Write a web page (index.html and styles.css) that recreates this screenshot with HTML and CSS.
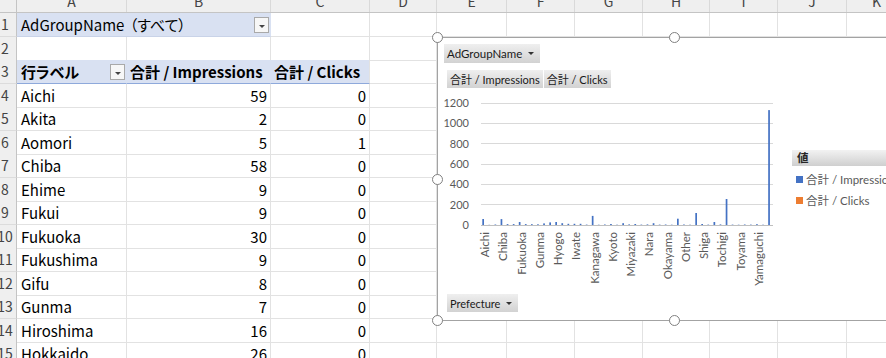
FILE: index.html
```html
<!DOCTYPE html>
<html lang="ja">
<head>
    <meta charset="UTF-8">
    <title>Pivot - Prefecture</title>
    <link rel="stylesheet" href="styles.css">
</head>
<body>
<div class="page">
    <div class="sheet">
        <div class="row heads">
            <div class="corner"></div>
            <div class="ch">A</div><div class="ch">B</div><div class="ch">C</div><div class="ch">D</div>
            <div class="ch">E</div><div class="ch">F</div><div class="ch">G</div><div class="ch">H</div>
            <div class="ch">I</div><div class="ch">J</div><div class="ch">K</div>
        </div>

        <div class="row">
            <div class="rh">1</div>
            <div class="c band filter"><span>AdGroupName <span class="all">（すべて）</span></span><span class="dd"></span></div>
            <div class="c"></div>
            <span class="c"></span><span class="c"></span><span class="c"></span><span class="c"></span>
            <span class="c"></span><span class="c"></span><span class="c"></span><span class="c"></span>
        </div>

        <div class="row">
            <div class="rh">2</div>
            <div class="c"></div><div class="c"></div><div class="c"></div>
            <span class="c"></span><span class="c"></span><span class="c"></span><span class="c"></span>
            <span class="c"></span><span class="c"></span><span class="c"></span><span class="c"></span>
        </div>

        <div class="row">
            <div class="rh">3</div>
            <div class="c band head label-head">行ラベル<span class="dd"></span></div>
            <div class="c band head">合計 / Impressions</div>
            <div class="c band head last">合計 / Clicks</div>
            <span class="c"></span><span class="c"></span><span class="c"></span><span class="c"></span>
            <span class="c"></span><span class="c"></span><span class="c"></span><span class="c"></span>
        </div>

        <div class="row">
            <div class="rh">4</div>
            <div class="c">Aichi</div><div class="c num">59</div><div class="c num">0</div>
            <span class="c"></span><span class="c"></span><span class="c"></span><span class="c"></span>
            <span class="c"></span><span class="c"></span><span class="c"></span><span class="c"></span>
        </div>
        <div class="row">
            <div class="rh">5</div>
            <div class="c">Akita</div><div class="c num">2</div><div class="c num">0</div>
            <span class="c"></span><span class="c"></span><span class="c"></span><span class="c"></span>
            <span class="c"></span><span class="c"></span><span class="c"></span><span class="c"></span>
        </div>
        <div class="row">
            <div class="rh">6</div>
            <div class="c">Aomori</div><div class="c num">5</div><div class="c num">1</div>
            <span class="c"></span><span class="c"></span><span class="c"></span><span class="c"></span>
            <span class="c"></span><span class="c"></span><span class="c"></span><span class="c"></span>
        </div>
        <div class="row">
            <div class="rh">7</div>
            <div class="c">Chiba</div><div class="c num">58</div><div class="c num">0</div>
            <span class="c"></span><span class="c"></span><span class="c"></span><span class="c"></span>
            <span class="c"></span><span class="c"></span><span class="c"></span><span class="c"></span>
        </div>
        <div class="row">
            <div class="rh">8</div>
            <div class="c">Ehime</div><div class="c num">9</div><div class="c num">0</div>
            <span class="c"></span><span class="c"></span><span class="c"></span><span class="c"></span>
            <span class="c"></span><span class="c"></span><span class="c"></span><span class="c"></span>
        </div>
        <div class="row">
            <div class="rh">9</div>
            <div class="c">Fukui</div><div class="c num">9</div><div class="c num">0</div>
            <span class="c"></span><span class="c"></span><span class="c"></span><span class="c"></span>
            <span class="c"></span><span class="c"></span><span class="c"></span><span class="c"></span>
        </div>
        <div class="row">
            <div class="rh">10</div>
            <div class="c">Fukuoka</div><div class="c num">30</div><div class="c num">0</div>
            <span class="c"></span><span class="c"></span><span class="c"></span><span class="c"></span>
            <span class="c"></span><span class="c"></span><span class="c"></span><span class="c"></span>
        </div>
        <div class="row">
            <div class="rh">11</div>
            <div class="c">Fukushima</div><div class="c num">9</div><div class="c num">0</div>
            <span class="c"></span><span class="c"></span><span class="c"></span><span class="c"></span>
            <span class="c"></span><span class="c"></span><span class="c"></span><span class="c"></span>
        </div>
        <div class="row">
            <div class="rh">12</div>
            <div class="c">Gifu</div><div class="c num">8</div><div class="c num">0</div>
            <span class="c"></span><span class="c"></span><span class="c"></span><span class="c"></span>
            <span class="c"></span><span class="c"></span><span class="c"></span><span class="c"></span>
        </div>
        <div class="row">
            <div class="rh">13</div>
            <div class="c">Gunma</div><div class="c num">7</div><div class="c num">0</div>
            <span class="c"></span><span class="c"></span><span class="c"></span><span class="c"></span>
            <span class="c"></span><span class="c"></span><span class="c"></span><span class="c"></span>
        </div>
        <div class="row">
            <div class="rh">14</div>
            <div class="c">Hiroshima</div><div class="c num">16</div><div class="c num">0</div>
            <span class="c"></span><span class="c"></span><span class="c"></span><span class="c"></span>
            <span class="c"></span><span class="c"></span><span class="c"></span><span class="c"></span>
        </div>
        <div class="row">
            <div class="rh">15</div>
            <div class="c">Hokkaido</div><div class="c num">26</div><div class="c num">0</div>
            <span class="c"></span><span class="c"></span><span class="c"></span><span class="c"></span>
            <span class="c"></span><span class="c"></span><span class="c"></span><span class="c"></span>
        </div>
    </div>

    <!-- pivot chart floating over the sheet -->
    <div class="chart">
        <div class="btn chart-filter">AdGroupName<span class="tri"></span></div>
        <div class="series-row">
            <div class="btn series">合計 / Impressions</div>
            <div class="btn series">合計 / Clicks</div>
        </div>
        <div class="plot-row">
            <svg class="plot" width="350" height="200" viewBox="0 0 350 200">
                <g class="grid">
                    <line x1="43" x2="335" y1="10.5" y2="10.5"/>
                    <line x1="43" x2="335" y1="30.5" y2="30.5"/>
                    <line x1="43" x2="335" y1="50.5" y2="50.5"/>
                    <line x1="43" x2="335" y1="71.5" y2="71.5"/>
                    <line x1="43" x2="335" y1="91.5" y2="91.5"/>
                    <line x1="43" x2="335" y1="111.5" y2="111.5"/>
                    <line class="axis" x1="43" x2="335" y1="132.5" y2="132.5"/>
                </g>
                <g class="ylab">
                    <text x="31" y="14">1200</text>
                    <text x="31" y="34">1000</text>
                    <text x="31" y="55">800</text>
                    <text x="31" y="75">600</text>
                    <text x="31" y="95">400</text>
                    <text x="31" y="116">200</text>
                    <text x="31" y="136">0</text>
                </g>
                <g class="bars">
                    <rect x="44.3" y="126.0" width="1.7" height="6.0"/>
                    <rect x="50.4" y="131.8" width="1.7" height="0.2"/>
                    <rect x="56.5" y="131.5" width="1.7" height="0.5"/>
                    <rect x="62.6" y="126.1" width="1.7" height="5.9"/>
                    <rect x="68.7" y="131.1" width="1.7" height="0.9"/>
                    <rect x="74.8" y="131.1" width="1.7" height="0.9"/>
                    <rect x="80.8" y="129.0" width="1.7" height="3.0"/>
                    <rect x="86.9" y="131.1" width="1.7" height="0.9"/>
                    <rect x="93.0" y="131.2" width="1.7" height="0.8"/>
                    <rect x="99.1" y="131.3" width="1.7" height="0.7"/>
                    <rect x="105.2" y="130.4" width="1.7" height="1.6"/>
                    <rect x="111.3" y="129.4" width="1.7" height="2.6"/>
                    <rect x="117.3" y="129.0" width="1.7" height="3.0"/>
                    <rect x="123.4" y="130.2" width="1.7" height="1.8"/>
                    <rect x="129.5" y="130.8" width="1.7" height="1.2"/>
                    <rect x="135.6" y="130.8" width="1.7" height="1.2"/>
                    <rect x="141.7" y="130.8" width="1.7" height="1.2"/>
                    <rect x="147.8" y="131.6" width="1.7" height="0.4"/>
                    <rect x="153.8" y="122.9" width="1.7" height="9.1"/>
                    <rect x="159.9" y="131.7" width="1.7" height="0.3"/>
                    <rect x="166.0" y="131.5" width="1.7" height="0.5"/>
                    <rect x="172.1" y="131.0" width="1.7" height="1.0"/>
                    <rect x="178.2" y="131.7" width="1.7" height="0.3"/>
                    <rect x="184.3" y="130.2" width="1.7" height="1.8"/>
                    <rect x="190.3" y="131.4" width="1.7" height="0.6"/>
                    <rect x="196.4" y="131.0" width="1.7" height="1.0"/>
                    <rect x="202.5" y="131.6" width="1.7" height="0.4"/>
                    <rect x="208.6" y="131.4" width="1.7" height="0.6"/>
                    <rect x="214.7" y="130.2" width="1.7" height="1.8"/>
                    <rect x="220.8" y="131.6" width="1.7" height="0.4"/>
                    <rect x="226.8" y="131.5" width="1.7" height="0.5"/>
                    <rect x="232.9" y="131.7" width="1.7" height="0.3"/>
                    <rect x="239.0" y="125.7" width="1.7" height="6.3"/>
                    <rect x="245.1" y="131.5" width="1.7" height="0.5"/>
                    <rect x="251.2" y="131.7" width="1.7" height="0.3"/>
                    <rect x="257.3" y="120.0" width="1.7" height="12.0"/>
                    <rect x="263.3" y="131.0" width="1.7" height="1.0"/>
                    <rect x="269.4" y="131.6" width="1.7" height="0.4"/>
                    <rect x="275.5" y="129.0" width="1.7" height="3.0"/>
                    <rect x="281.6" y="131.4" width="1.7" height="0.6"/>
                    <rect x="287.7" y="106.0" width="1.7" height="26.0"/>
                    <rect x="293.7" y="131.6" width="1.7" height="0.4"/>
                    <rect x="299.8" y="131.7" width="1.7" height="0.3"/>
                    <rect x="305.9" y="131.5" width="1.7" height="0.5"/>
                    <rect x="312.0" y="131.6" width="1.7" height="0.4"/>
                    <rect x="318.1" y="131.2" width="1.7" height="0.8"/>
                    <rect x="324.2" y="131.7" width="1.7" height="0.3"/>
                    <rect x="330.2" y="17.1" width="1.7" height="114.9"/>
                </g>
                <g class="xlab">
                    <text x="51" y="139" transform="rotate(-90 51 139)">Aichi</text>
                    <text x="69.25" y="139" transform="rotate(-90 69.25 139)">Chiba</text>
                    <text x="87.5" y="139" transform="rotate(-90 87.5 139)">Fukuoka</text>
                    <text x="105.75" y="139" transform="rotate(-90 105.75 139)">Gunma</text>
                    <text x="124" y="139" transform="rotate(-90 124 139)">Hyogo</text>
                    <text x="142.25" y="139" transform="rotate(-90 142.25 139)">Iwate</text>
                    <text x="160.5" y="139" transform="rotate(-90 160.5 139)">Kanagawa</text>
                    <text x="178.75" y="139" transform="rotate(-90 178.75 139)">Kyoto</text>
                    <text x="197" y="139" transform="rotate(-90 197 139)">Miyazaki</text>
                    <text x="215.25" y="139" transform="rotate(-90 215.25 139)">Nara</text>
                    <text x="233.5" y="139" transform="rotate(-90 233.5 139)">Okayama</text>
                    <text x="251.75" y="139" transform="rotate(-90 251.75 139)">Other</text>
                    <text x="270" y="139" transform="rotate(-90 270 139)">Shiga</text>
                    <text x="288.25" y="139" transform="rotate(-90 288.25 139)">Tochigi</text>
                    <text x="306.5" y="139" transform="rotate(-90 306.5 139)">Toyama</text>
                    <text x="324.75" y="139" transform="rotate(-90 324.75 139)">Yamaguchi</text>
                </g>
            </svg>
            <div class="legend">
                <div class="legend-head">値</div>
                <div class="legend-item"><span class="swatch blue"></span>合計 / Impressions</div>
                <div class="legend-item"><span class="swatch orange"></span>合計 / Clicks</div>
            </div>
        </div>
        <div class="btn axis-filter">Prefecture<span class="tri"></span></div>

        <span class="handle h-tl"></span>
        <span class="handle h-tm"></span>
        <span class="handle h-ml"></span>
        <span class="handle h-bl"></span>
        <span class="handle h-bm"></span>
    </div>
</div>
</body>
</html>
```

FILE: styles.css
```css
html, body {
    margin: 0;
    padding: 0;
    background: #fff;
}

body {
    width: 886px;
    height: 358px;
    overflow: hidden;
    font-family: "Noto Sans CJK JP", "Noto Sans", sans-serif;
    color: #000;
}

.page {
    position: relative;
    display: flow-root;
    width: 886px;
    height: 358px;
}

/* ---------- sheet ---------- */

.sheet {
    margin: -7px 0 0 -6px;
    font-feature-settings: "palt";
}

.row {
    display: grid;
    grid-template-columns: 23px 110px 144px 99px 67px 70px 68px 68px 67px 68px 69px 60px;
    height: 23.5px;
}

.heads {
    height: 20px;
    background: #efefef;
    border-bottom: 1px solid #c4c4c4;
    box-sizing: border-box;
}

.corner {
    border-right: 1px solid #c4c4c4;
}

.ch {
    font-size: 14px;
    line-height: 16px;
    text-align: center;
    color: #444;
    border-right: 1px solid #d9d9d9;
}

.rh {
    background: #efefef;
    border-right: 1px solid #c4c4c4;
    border-bottom: 1px solid #dcdcdc;
    font-size: 14px;
    line-height: 23px;
    text-align: center;
    color: #444;
}

.c {
    display: block;
    border-right: 1px solid #e2e2e2;
    border-bottom: 1px solid #e2e2e2;
    font-size: 15px;
    line-height: 23px;
    padding: 0 3px 0 4px;
    white-space: nowrap;
    overflow: hidden;
}

.num {
    text-align: right;
}

.band {
    background: #d9e1f2;
    border-right-color: #d9e1f2;
}

.filter {
    grid-column: span 2;
    display: flex;
    justify-content: space-between;
    align-items: center;
    border-bottom-color: #c9d3e8;
    padding-right: 1px;
}

.all {
    margin-left: 2px;
}

.head {
    font-weight: bold;
    border-bottom-color: #8ea9db;
    padding-left: 3px;
}

.last {
    border-right-color: #e2e2e2;
}

.label-head {
    display: flex;
    justify-content: space-between;
    align-items: center;
    padding-left: 4px;
    padding-right: 1px;
}

.dd {
    position: relative;
    width: 15px;
    height: 16px;
    background: #f7f7f7;
    border: 1px solid #a9a9a9;
    box-sizing: border-box;
}

.dd::after {
    content: "";
    position: absolute;
    left: 4px;
    top: 7px;
    border-left: 3px solid transparent;
    border-right: 3px solid transparent;
    border-top: 3px solid #444;
}

/* ---------- chart ---------- */

.chart {
    position: absolute;
    left: 437px;
    top: 37px;
    width: 474px;
    height: 284px;
    box-sizing: border-box;
    border: 1px solid #a3a3a3;
    background: #fff;
    font-family: Lato, "Noto Sans CJK JP", sans-serif;
    font-size: 11px;
}

.btn {
    display: inline-flex;
    align-items: center;
    box-sizing: border-box;
    background: linear-gradient(#efefef, #d2d2d2);
    color: #1a1a1a;
    white-space: nowrap;
}

.tri {
    display: inline-block;
    margin-left: 6px;
    border-left: 3px solid transparent;
    border-right: 3px solid transparent;
    border-top: 3px solid #333;
}

.chart-filter {
    margin: 6px 0 0 6px;
    height: 19px;
    padding: 0 6px 0 3px;
    font-size: 11.5px;
}

.series-row {
    display: flex;
    gap: 1px;
    margin: 7px 0 0 9px;
}

.series {
    height: 18px;
    padding: 0 3px;
    font-size: 11px;
}

.plot-row {
    display: flex;
    margin-top: 5px;
}

.plot {
    display: block;
    flex: none;
}

.grid line {
    stroke: #d9d9d9;
    stroke-width: 1;
}

.grid .axis {
    stroke: #bfbfbf;
}

.ylab text {
    font-size: 11px;
    fill: #595959;
    text-anchor: end;
}

.xlab text {
    font-size: 11.5px;
    fill: #595959;
    text-anchor: end;
}

.bars rect {
    fill: #4472c4;
}

.legend {
    margin: 57px 0 0 4px;
    width: 120px;
    flex: none;
}

.legend-head {
    height: 16px;
    line-height: 16px;
    padding-left: 5px;
    background: linear-gradient(#f2f2f2, #cfcfcf);
    font-weight: bold;
    font-size: 11.5px;
    color: #262626;
}

.legend-item {
    display: flex;
    align-items: center;
    gap: 3px;
    margin-top: 5px;
    padding-left: 4px;
    height: 16px;
    color: #595959;
    font-size: 11.5px;
    white-space: nowrap;
}

.swatch {
    width: 7px;
    height: 7px;
    flex: none;
}

.blue { background: #4472c4; }
.orange { background: #ed7d31; }

.axis-filter {
    margin: 1px 0 0 9px;
    height: 18px;
    padding: 0 6px 0 3px;
    font-size: 11px;
}

.handle {
    position: absolute;
    width: 11px;
    height: 11px;
    box-sizing: border-box;
    border: 1.5px solid #808080;
    border-radius: 50%;
    background: #fff;
}

.h-tl { left: -6px; top: -6px; }
.h-tm { left: 231px; top: -6px; }
.h-ml { left: -6px; top: 136px; }
.h-bl { left: -6px; bottom: -6px; }
.h-bm { left: 231px; bottom: -6px; }
```
